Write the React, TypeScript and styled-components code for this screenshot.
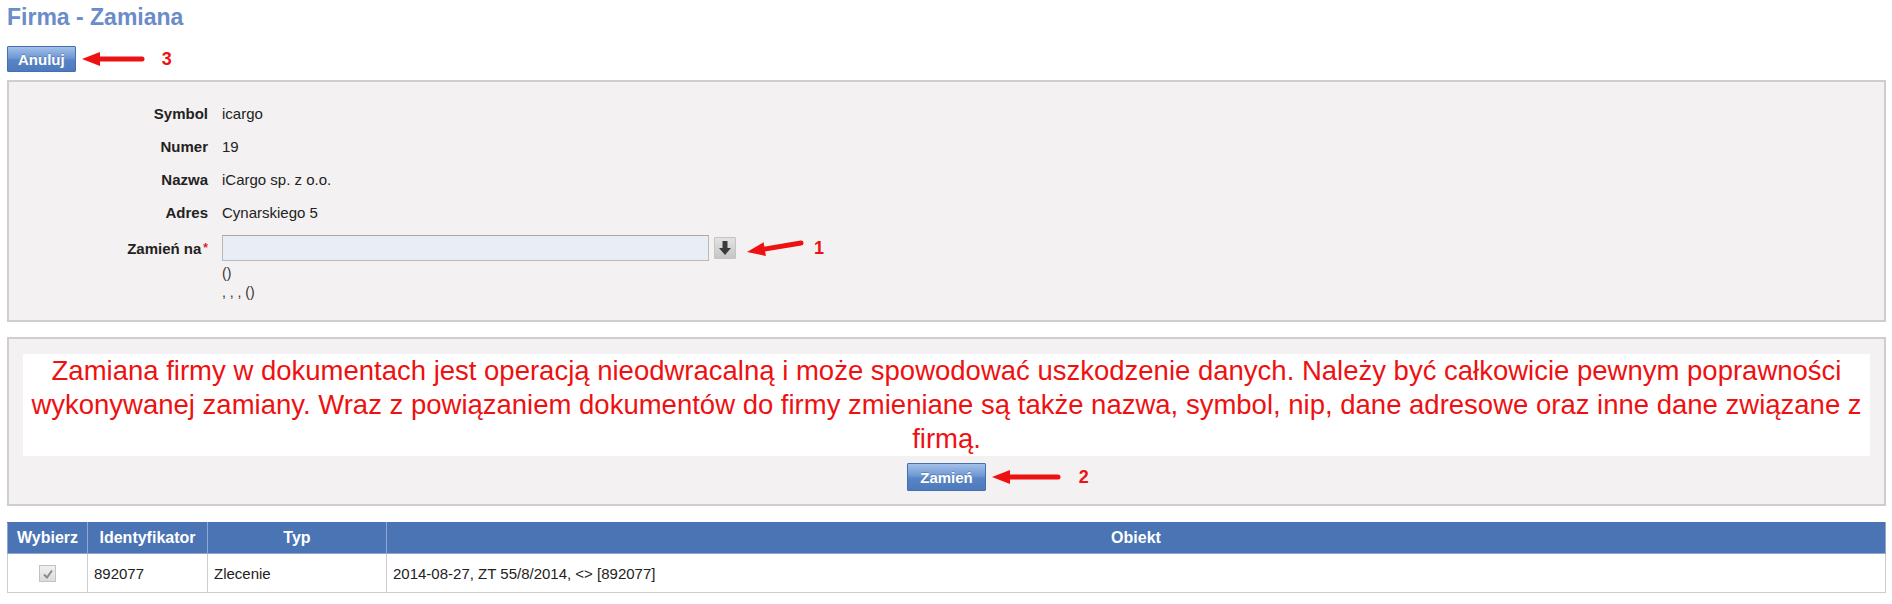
import React from 'react';
import styled, { createGlobalStyle } from 'styled-components';

const Global = createGlobalStyle`
  html, body { margin: 0; padding: 0; background: #ffffff; }
  body { font-family: "Liberation Sans", Arial, sans-serif; color: #222222; }
  * { box-sizing: border-box; }
`;

const Page = styled.div`
  width: 1892px;
  padding: 2px 6px 0 7px;
`;

const Title = styled.h1`
  margin: 0;
  font-size: 23px;
  line-height: 30px;
  font-weight: bold;
  color: #6a8cc8;
`;

const ActionRow = styled.div`
  display: flex;
  align-items: center;
  height: 26px;
  margin-top: 14px;
`;

const BlueButton = styled.button<{ $h: number; $px: number }>`
  height: ${(p) => p.$h}px;
  padding: 0 ${(p) => p.$px}px;
  border: 1px solid #4570ad;
  border-radius: 1px;
  background: linear-gradient(#a3c1ea 0%, #6f98d2 45%, #5884c6 55%, #4d7abd 100%);
  color: #ffffff;
  font: bold 15px "Liberation Sans", Arial, sans-serif;
  text-shadow: 0 -1px 0 rgba(0, 0, 0, 0.2);
  cursor: pointer;
`;

const Mark = styled.span<{ $ml: number }>`
  margin-left: ${(p) => p.$ml}px;
  color: #ee1111;
  font: bold 18px "Liberation Sans", Arial, sans-serif;
  line-height: 20px;
`;

const ArrowSvg = styled.svg<{ $ml: number }>`
  display: block;
  flex: none;
  margin-left: ${(p) => p.$ml}px;
`;

const Panel = styled.section`
  margin-top: 8px;
  background: #f3f1f1;
  border: 2px solid #cfcdcd;
  padding: 15px 14px 18px 0;
`;

const Field = styled.div`
  display: grid;
  grid-template-columns: 199px 1fr;
  column-gap: 14px;
  align-items: center;
  height: 33px;
`;

const EditField = styled.div`
  display: grid;
  grid-template-columns: 199px 1fr;
  column-gap: 14px;
  align-items: start;
  margin-top: 6px;
`;

const Label = styled.div`
  text-align: right;
  font-weight: bold;
  font-size: 15px;
  line-height: 26px;
  color: #222222;
  white-space: nowrap;
`;

const Req = styled.span`
  color: #e02020;
  font-size: 12px;
  margin-left: 2px;
  vertical-align: 2px;
`;

const Value = styled.div`
  font-size: 15px;
  color: #222222;
`;

const InputLine = styled.div`
  display: flex;
  align-items: center;
  height: 26px;
`;

const TextInput = styled.input`
  width: 487px;
  height: 26px;
  border: 1px solid #b9b9b9;
  border-top-color: #a9a9a9;
  background: #e9eef6;
  padding: 0 4px;
  font: 14px "Liberation Sans", Arial, sans-serif;
  outline: none;
`;

const DropButton = styled.button`
  width: 22px;
  height: 22px;
  margin-left: 5px;
  padding: 0;
  border: 1px solid #c4c4c4;
  border-radius: 1px;
  background: linear-gradient(#e2e2e2, #c6c6c6);
  display: flex;
  align-items: center;
  justify-content: center;
  cursor: pointer;
`;

const Hints = styled.div`
  margin-top: 3px;
  font-size: 14px;
  line-height: 19px;
  color: #333333;
`;

const WarnPanel = styled.section`
  margin-top: 15px;
  background: #f3f1f1;
  border: 2px solid #cfcdcd;
  padding: 15px 14px 13px;
`;

const WarningBox = styled.div`
  background: #ffffff;
  color: #ee1111;
  font-size: 27.5px;
  line-height: 34px;
  text-align: center;
`;

const ButtonRow = styled.div`
  display: flex;
  justify-content: center;
  margin-top: 7px;
`;

const ButtonWrap = styled.div`
  position: relative;
`;

const SideNote = styled.div`
  position: absolute;
  left: 100%;
  top: 0;
  height: 28px;
  display: flex;
  align-items: center;
`;

const Grid = styled.table`
  margin-top: 16px;
  width: 100%;
  border-collapse: collapse;
  font-family: "Liberation Sans", Arial, sans-serif;
`;

const Th = styled.th<{ $w?: number }>`
  ${(p) => (p.$w ? `width: ${p.$w}px;` : '')}
  height: 31px;
  padding: 0 4px;
  background: #4a74b4;
  color: #ffffff;
  font-size: 16px;
  font-weight: bold;
  text-align: center;
  border: 1px solid #8da8d2;
  border-top-color: #4a74b4;
`;

const Td = styled.td<{ $center?: boolean }>`
  height: 39px;
  padding: 0 6px;
  font-size: 15px;
  color: #222222;
  border: 1px solid #cdcdcd;
  text-align: ${(p) => (p.$center ? 'center' : 'left')};
  vertical-align: middle;
  background: #ffffff;
`;

const CheckBox = styled.span`
  display: inline-flex;
  align-items: center;
  justify-content: center;
  width: 17px;
  height: 17px;
  border: 1px solid #c2c2c2;
  background: linear-gradient(#f0f0f0, #dcdcdc);
  vertical-align: middle;
`;

type ArrowProps = { w: number; h: number; x1: number; y1: number; x2: number; y2: number; ml: number };

const Arrow: React.FC<ArrowProps> = ({ w, h, x1, y1, x2, y2, ml }) => {
  const dx = x1 - x2;
  const dy = y1 - y2;
  const len = Math.sqrt(dx * dx + dy * dy);
  const ux = dx / len;
  const uy = dy / len;
  const headLen = 18;
  const half = 7;
  const bx = x2 + ux * headLen;
  const by = y2 + uy * headLen;
  const p1 = `${x2},${y2}`;
  const p2 = `${bx - uy * half},${by + ux * half}`;
  const p3 = `${bx + uy * half},${by - ux * half}`;
  return (
    <ArrowSvg $ml={ml} width={w} height={h} viewBox={`0 0 ${w} ${h}`}>
      <line x1={x1} y1={y1} x2={bx - ux * 2} y2={by - uy * 2} stroke="#ee1111" strokeWidth={5} strokeLinecap="round" />
      <polygon points={`${p1} ${p2} ${p3}`} fill="#ee1111" />
    </ArrowSvg>
  );
};

const DownIcon = () => (
  <svg width="12" height="16" viewBox="0 0 12 16">
    <rect x="3.5" y="1" width="5" height="8" fill="#3a3a3a" />
    <polygon points="0,8 12,8 6,15" fill="#3a3a3a" />
  </svg>
);

const CheckIcon = () => (
  <svg width="12" height="12" viewBox="0 0 12 12">
    <polyline points="2,6.5 5,9.5 10,2.5" fill="none" stroke="#8a8a8a" strokeWidth="2" />
  </svg>
);

const info: [string, string][] = [
  ['Symbol', 'icargo'],
  ['Numer', '19'],
  ['Nazwa', 'iCargo sp. z o.o.'],
  ['Adres', 'Cynarskiego 5'],
];

export default function App() {
  return (
    <>
      <Global />
      <Page>
        <Title>Firma - Zamiana</Title>
        <ActionRow>
          <BlueButton $h={26} $px={10}>Anuluj</BlueButton>
          <Arrow w={64} h={20} x1={61} y1={10} x2={1} y2={10} ml={5} />
          <Mark $ml={17}>3</Mark>
        </ActionRow>

        <Panel>
          {info.map(([k, v]) => (
            <Field key={k}>
              <Label>{k}</Label>
              <Value>{v}</Value>
            </Field>
          ))}
          <EditField>
            <Label>
              Zamień na<Req>*</Req>
            </Label>
            <div>
              <InputLine>
                <TextInput type="text" />
                <DropButton aria-label="rozwiń">
                  <DownIcon />
                </DropButton>
                <Arrow w={58} h={22} x1={55} y1={6} x2={1} y2={15} ml={10} />
                <Mark $ml={10}>1</Mark>
              </InputLine>
              <Hints>
                ()
                <br />, , , ()
              </Hints>
            </div>
          </EditField>
        </Panel>

        <WarnPanel>
          <WarningBox>
            Zamiana firmy w dokumentach jest operacją nieodwracalną i może spowodować uszkodzenie danych. Należy być całkowicie pewnym poprawności wykonywanej zamiany. Wraz z powiązaniem dokumentów do firmy zmieniane są także nazwa, symbol, nip, dane adresowe oraz inne dane związane z firmą.
          </WarningBox>
          <ButtonRow>
            <ButtonWrap>
              <BlueButton $h={28} $px={12}>Zamień</BlueButton>
              <SideNote>
                <Arrow w={70} h={20} x1={67} y1={10} x2={1} y2={10} ml={5} />
                <Mark $ml={18}>2</Mark>
              </SideNote>
            </ButtonWrap>
          </ButtonRow>
        </WarnPanel>

        <Grid>
          <thead>
            <tr>
              <Th $w={80}>Wybierz</Th>
              <Th $w={120}>Identyfikator</Th>
              <Th $w={179}>Typ</Th>
              <Th>Obiekt</Th>
            </tr>
          </thead>
          <tbody>
            <tr>
              <Td $center>
                <CheckBox>
                  <CheckIcon />
                </CheckBox>
              </Td>
              <Td>892077</Td>
              <Td>Zlecenie</Td>
              <Td>2014-08-27, ZT 55/8/2014, &lt;&gt; [892077]</Td>
            </tr>
          </tbody>
        </Grid>
      </Page>
    </>
  );
}
